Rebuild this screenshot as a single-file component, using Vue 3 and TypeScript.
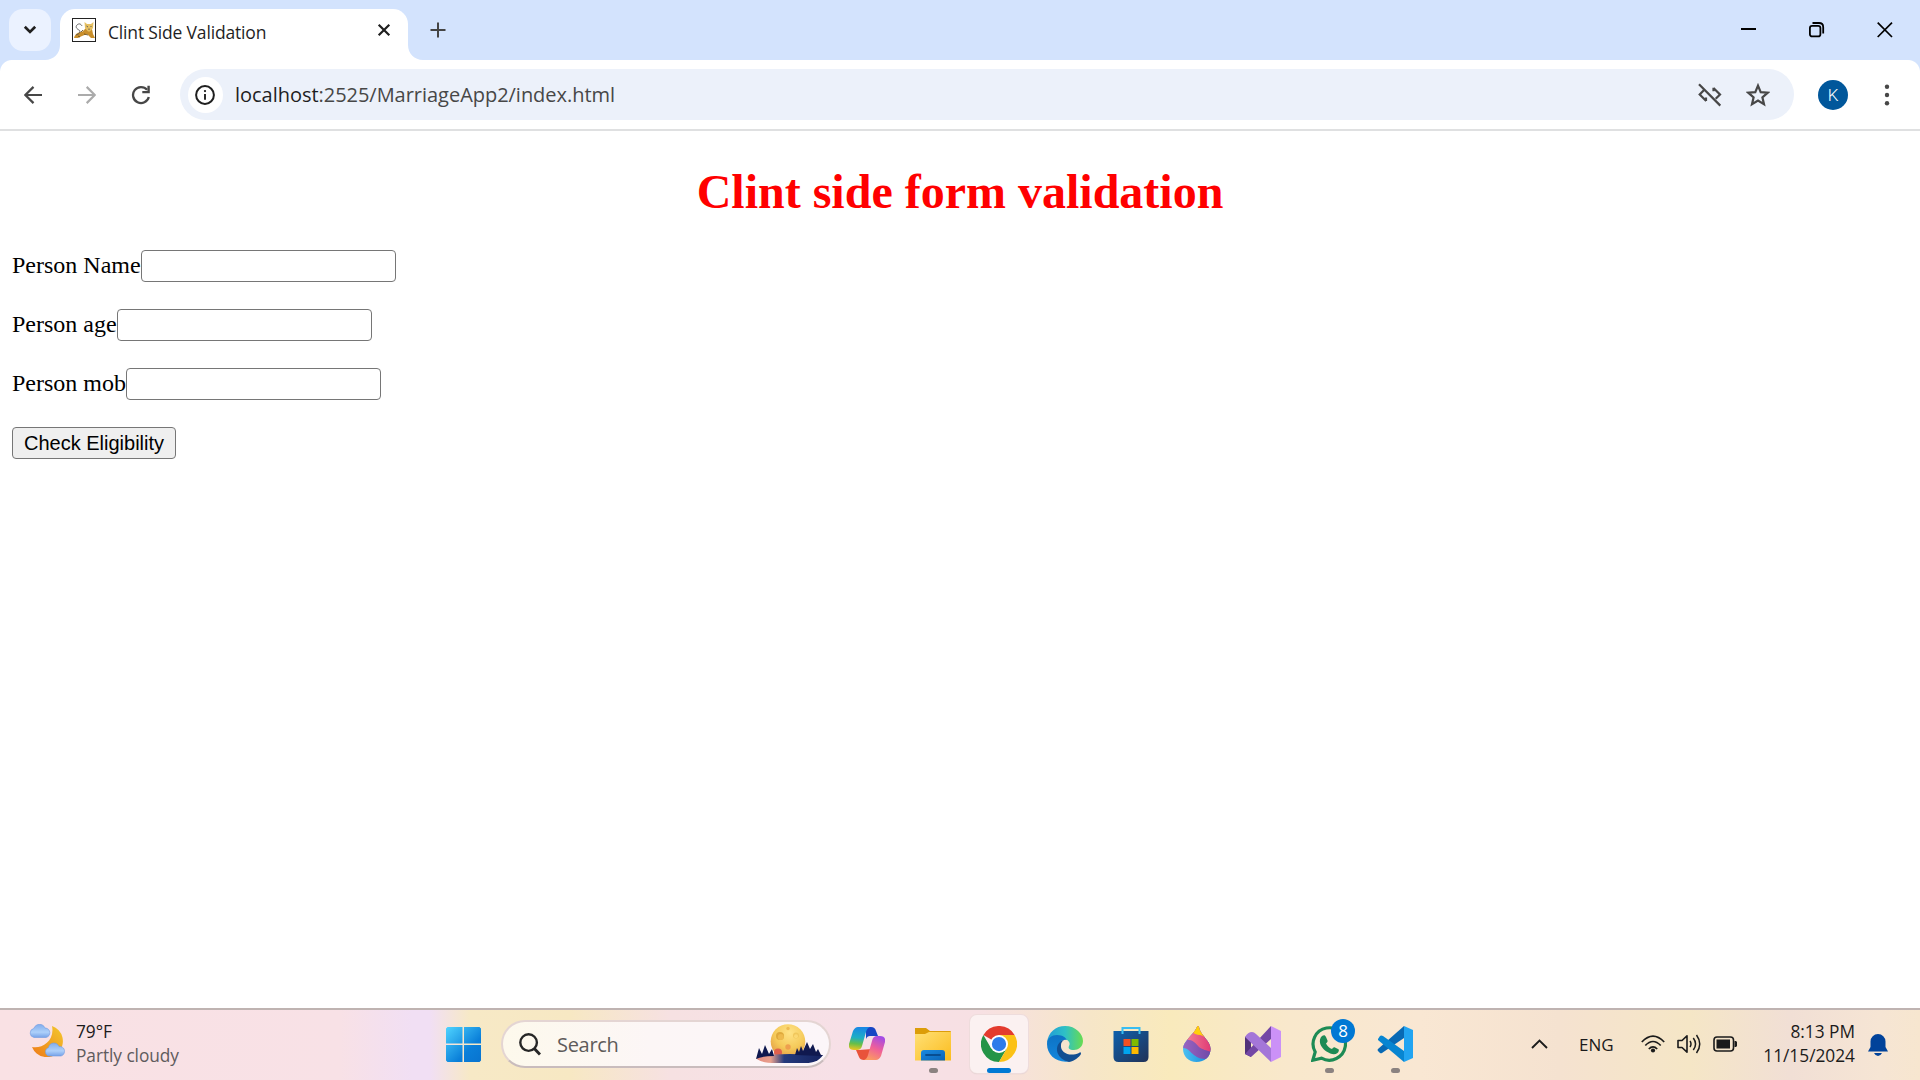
<script setup lang="ts">
import { ref } from 'vue'

interface Field {
  id: string
  label: string
}

const fields: Field[] = [
  { id: 'pname', label: 'Person Name' },
  { id: 'page', label: 'Person age' },
  { id: 'pmob', label: 'Person mob' },
]
const values = ref<Record<string, string>>({ pname: '', page: '', pmob: '' })
</script>

<template>
  <div class="screen">
    <header class="titlebar">
      <button class="tab-search" aria-label="Search tabs">
        <svg width="14" height="10" viewBox="0 0 14 10"><path d="M1.8 1.8 7 6.9l5.200-5.100" fill="none" stroke="#1f1f1f" stroke-width="2.700" /></svg>
      </button>
      <svg class="flare" width="15" height="51" viewBox="0 0 15 51"><path d="M15 36v15H0c8.500 0 15-6.500 15-15z" fill="#fff" /></svg>
      <div class="tab">
        <svg class="favicon" width="24" height="24" viewBox="0 0 24 24">
          <rect x=".5" y=".5" width="23" height="23" fill="#fff" stroke="#222" />
          <path d="M2 20c1-4 4-6 8-6l4-4 6 1 1 5 2 4h-4l-4-4-5 2-4 2H2z" fill="#c98f2c" />
          <path d="M12.500 4l2.500 2h4l2.500-2-.5 6-3 3.500h-2L13 10z" fill="#e6c062" />
          <path d="M4 17C8 16 9 13 7 12S3 9 5 7s4-1 5 1M14.500 8l1.500 1M19.500 8l-1 1M17 10.500v1.500" fill="none" stroke="#555" stroke-width=".9" />
          <path d="M9 14l2-2M12 16l4 1M6 18l2 1" stroke="#5b4113" stroke-width=".8" />
        </svg>
        <span class="tab-title">Clint Side Validation</span>
        <svg class="tab-close" width="14" height="14" viewBox="0 0 14 14"><path d="M1.700 1.700l10.600 10.600M12.300 1.700 1.700 12.300" stroke="#1f1f1f" stroke-width="2.200" /></svg>
      </div>
      <svg class="flare" width="15" height="51" viewBox="0 0 15 51"><path d="M0 36v15h15C6.500 51 0 44.500 0 36z" fill="#fff" /></svg>
      <svg class="new-tab" width="16" height="16" viewBox="0 0 16 16"><path d="M8 .5v15M.5 8h15" stroke="#444" stroke-width="2" /></svg>
      <div class="window-controls">
        <svg width="16" height="16" viewBox="0 0 16 16"><path d="M0 7h15" stroke="#000" stroke-width="2" /></svg>
        <svg width="16" height="16" viewBox="0 0 16 16"><rect x=".9" y="3.900" width="10.500" height="10.500" rx="2.200" fill="none" stroke="#000" stroke-width="1.800" /><path d="M3.500 1H10Q14.200 1 14.200 5.200V11.500" fill="none" stroke="#000" stroke-width="1.800" /></svg>
        <svg width="16" height="16" viewBox="0 0 16 16"><path d="M.7.700l14.300 14.300M15 .7.700 15" stroke="#000" stroke-width="1.700" /></svg>
      </div>
    </header>

    <nav class="toolbar">
      <svg class="nav-icon" width="18" height="18" viewBox="0 0 18 18"><path d="M17.600 9H1.600M9 .9.900 9l8.100 8.100" transform="translate(.5)" fill="none" stroke="#474747" stroke-width="2.200" /></svg>
      <svg class="nav-icon forward" width="18" height="18" viewBox="0 0 18 18"><path d="M0 9h16.400M9 .9 17.100 9 9 17.100" transform="translate(-.3)" fill="none" stroke="#ababab" stroke-width="2.200" /></svg>
      <svg class="nav-icon reload" width="20" height="20" viewBox="0 0 20 20"><path d="M16.100 4.800A8 8 0 1 0 17.800 12" fill="none" stroke="#474747" stroke-width="2.300" /><path d="M18.800.8v7.500h-7.500V6h5.100V.8z" fill="#474747" /></svg>
      <div class="omnibox">
        <span class="site-info">
          <svg width="20" height="20" viewBox="0 0 20 20"><circle cx="10" cy="10" r="8.900" fill="none" stroke="#1f1f1f" stroke-width="2" /><path d="M10 9v5.700" stroke="#1f1f1f" stroke-width="1.900" /><circle cx="10" cy="6.100" r="1.150" fill="#1f1f1f" /></svg>
        </span>
        <span class="url"><b>localhost</b>:2525/MarriageApp2/index.html</span>
        <svg class="link-off" width="24" height="24" viewBox="0 0 24 24"><path d="M1 1.300l21.300 21.300M5.800 7.200 1.700 11.500 8.200 18M8 18v-3.500M15.500 5l6.500 6.500-4.300 4.300M15.500 4.800v3.500" fill="none" stroke="#474747" stroke-width="2.200" /></svg>
        <svg class="star" width="24" height="24" viewBox="0 0 24 24"><path d="M12 2.600l2.700 6.500 7 .6-5.300 4.600 1.600 6.900-6-3.700-6 3.700 1.600-6.900L2.300 9.700l7-.6z" fill="none" stroke="#474747" stroke-width="2.200" /></svg>
      </div>
      <span class="avatar">K</span>
      <svg class="menu" width="6" height="22" viewBox="0 0 6 22"><circle cx="3" cy="2.700" r="2.200" /><circle cx="3" cy="11" r="2.200" /><circle cx="3" cy="19.300" r="2.200" /></svg>
    </nav>

    <main class="page">
      <h1>Clint side form validation</h1>
      <form @submit.prevent>
        <div v-for="f in fields" :key="f.id" class="row">
          <label :for="f.id">{{ f.label }}</label><input :id="f.id" v-model="values[f.id]" type="text" />
        </div>
        <button class="submit" type="submit">Check Eligibility</button>
      </form>
    </main>

    <footer class="taskbar">
      <div class="weather">
        <svg width="36" height="33" viewBox="0 0 36 33">
          <defs>
            <linearGradient id="moonG" x1="1" y1="0" x2="0" y2="1"><stop stop-color="#f3c92d" /><stop offset="1" stop-color="#ee7a18" /></linearGradient>
            <linearGradient id="cloudG" x1="0" y1="0" x2="0" y2="1"><stop stop-color="#82adec" /><stop offset=".6" stop-color="#add0fa" /><stop offset="1" stop-color="#76a2e8" /></linearGradient>
          </defs>
          <path d="M23 2a16 16 0 1 1-20 21C13 25 26 17 23 2z" fill="url(#moonG)" />
          <path d="M5 13.500a4.600 4.600 0 0 1-.3-9C7-1 14-1 16 4c6 0 6.500 8.500 1 9.500z" fill="url(#cloudG)" stroke="#719be0" stroke-width=".6" />
          <path d="M19 32a4.600 4.600 0 0 1 .5-8.500c1-5.500 8.500-6 10.500-1 7-.5 7 8.500 2 9.500z" fill="url(#cloudG)" stroke="#719be0" stroke-width=".6" />
        </svg>
        <div class="weather-text"><span>79°F</span><span class="dim">Partly cloudy</span></div>
      </div>

      <svg class="start" width="35" height="35" viewBox="0 0 35 35">
        <defs><linearGradient id="winG" gradientUnits="userSpaceOnUse" x1="0" y1="0" x2="35" y2="35"><stop stop-color="#4fd4ff" /><stop offset=".65" stop-color="#0a7fd9" /><stop offset="1" stop-color="#0873cf" /></linearGradient></defs>
        <path d="M1.500 0h15v16.500H0v-15zM18 0h15.500L35 1.500v15H18zM0 18h16.500v17h-15L0 33.500zM18 18h17v15.500L33.500 35H18z" fill="url(#winG)" />
      </svg>

      <div class="search">
        <svg class="glass" width="22" height="23" viewBox="0 0 22 23"><circle cx="9.600" cy="9.600" r="8.300" fill="none" stroke="#262626" stroke-width="2.400" /><path d="M15.500 15.800l5.500 5.700" stroke="#262626" stroke-width="3" /></svg>
        <span>Search</span>
        <svg class="moon" width="67" height="40" viewBox="0 0 67 40">
          <defs>
            <radialGradient id="moonR" cx=".55" cy=".25" r=".8"><stop stop-color="#ffe387" /><stop offset=".55" stop-color="#f5ca5a" /><stop offset="1" stop-color="#df9440" /></radialGradient>
            <linearGradient id="lakeG"><stop stop-color="#e58c80" /><stop offset=".22" stop-color="#e8a08e" /><stop offset=".42" stop-color="#243b7d" /><stop offset="1" stop-color="#15225f" /></linearGradient>
          </defs>
          <circle cx="32" cy="17.500" r="17.300" fill="url(#moonR)" />
          <circle cx="24" cy="12" r="4" fill="#dfa93c" /><circle cx="24.800" cy="13" r="3" fill="#eeba4d" />
          <circle cx="40" cy="11.500" r="3" fill="#f0c75c" /><circle cx="40" cy="12.200" r="2" fill="#fbd873" /><circle cx="32" cy="4.500" r="1.700" fill="#eebb52" />
          <circle cx="32" cy="23" r="2.700" fill="#ee9f4e" /><circle cx="22" cy="28.500" r="4" fill="#e1604c" />
          <path d="M0 34q12-4 34-4l33 1c-4 6-10 8-17 8H20Q4 39 0 34z" fill="url(#lakeG)" />
          <path d="M0 35l3-11 3 6 3-9 4 9 3-5 2 7q-12 0-18 3zM39 31l2-7 2 4 2-6 2 5 4-9 3 7 3-5 3 8 2-3 3 6 2 1z" fill="#10194f" />
        </svg>
      </div>

      <div class="apps">
        <div class="app">
          <svg width="36" height="36" viewBox="0 0 36 36">
            <defs>
              <linearGradient id="cpA" x1=".3" y1="0" x2=".2" y2="1"><stop stop-color="#1988e5" /><stop offset=".45" stop-color="#1eafc4" /><stop offset=".72" stop-color="#66bf48" /><stop offset="1" stop-color="#f3c420" /></linearGradient>
              <linearGradient id="cpB" x1=".7" y1="0" x2=".3" y2="1"><stop stop-color="#a34be6" /><stop offset=".5" stop-color="#ef6099" /><stop offset="1" stop-color="#fb9c60" /></linearGradient>
            </defs>
            <path d="M17 1h5q4 0 5 4l2 5h-8q-3 0-4 3z" fill="#1746c4" />
            <path d="M10 24H7l3 7q1 3 5 3h4l4-11z" fill="#e9533a" />
            <path d="M9 1h12q-3 1-4 5l-4 14q-1 4-5 4H5q-6 0-5-6L4 5q2-4 5-4z" fill="url(#cpA)" />
            <path d="M27 34H15q3-1 4-5l4-14q1-5 5-5h3q6 0 5 6l-4 14q-2 4-5 4z" fill="url(#cpB)" />
          </svg>
        </div>
        <div class="app running">
          <svg width="36" height="36" viewBox="0 0 36 36">
            <defs><linearGradient id="fdA" x1="0" y1="0" x2="1" y2="1"><stop stop-color="#ffe076" /><stop offset="1" stop-color="#fbbc1e" /></linearGradient><linearGradient id="fdB" x1="0" y1="0" x2="1" y2="1"><stop stop-color="#1a8ae0" /><stop offset="1" stop-color="#0b64b8" /></linearGradient></defs>
            <path d="M0 2h11l4 3h20q1 0 1 1v10H0z" fill="#dc9d09" />
            <path d="M0 8h10l4-2h22v28.500H0z" fill="url(#fdA)" />
            <path d="M6 34.500V27q0-3 3-3h18q3 0 3 3v7.500z" fill="url(#fdB)" /><path d="M11 29h14" stroke="#084d91" stroke-width="1.800" stroke-linecap="round" />
          </svg>
        </div>
        <div class="app active">
          <svg width="36" height="36" viewBox="0 0 48 48">
            <path d="M24 24 3.200 12A24 24 0 0 1 44.800 12z" fill="#e33b2e" />
            <path d="M13.600 30 3.200 12A24 24 0 0 0 24 48L34.400 30z" fill="#249447" />
            <path d="M24 12h20.800A24 24 0 0 1 24 48l10.400-18z" fill="#fbc116" />
            <circle cx="24" cy="24" r="12" fill="#fff" /><circle cx="24" cy="24" r="9.500" fill="#2d7bea" />
          </svg>
        </div>
        <div class="app">
          <svg width="36" height="36" viewBox="0 0 36 36">
            <defs><linearGradient id="edA"><stop stop-color="#209bd8" /><stop offset=".5" stop-color="#2ec0c6" /><stop offset="1" stop-color="#68dc50" /></linearGradient><linearGradient id="edB" x1="0" y1="0" x2="0" y2="1"><stop stop-color="#0d72c4" /><stop offset="1" stop-color="#1387dd" /></linearGradient></defs>
            <path d="M0 17C1 6 9 0 18 0c11 0 18 8 18 15 0 6-5 9-9 9-5 0-6-2-5-4 2-3-1-7-5-7C9 13 5 11 0 17z" fill="url(#edA)" />
            <path d="M0 18c0-6 5-9 10-9 6 0 9 3 10 5-6-1-9 4-8 9 1 6 6 11 12 12C11 38 0 30 0 18z" fill="url(#edB)" />
            <path d="M13 16c-6 6-3 17 9 20 6-1 10-5 12-8 0-2-1-2-2-1-9 4-19 0-18-8 0-2 1-4 3-5-2 0-3 1-4 2z" fill="#114e91" />
          </svg>
        </div>
        <div class="app">
          <svg width="36" height="36" viewBox="0 0 36 36">
            <defs><linearGradient id="stA" x1="0" y1="0" x2="1" y2="1"><stop stop-color="#0d60ac" /><stop offset="1" stop-color="#223257" /></linearGradient></defs>
            <path d="M.5 5h35v26q0 5-5 5h-25q-5 0-5-5z" fill="url(#stA)" /><path d="M9.500 8V2h17v6" fill="none" stroke="#38bdf2" stroke-width="2" />
            <path d="M10.500 13h7v7h-7z" fill="#f25022" /><path d="M18.500 13h7v7h-7z" fill="#7fba00" /><path d="M10.500 21h7v7h-7z" fill="#00a4ef" /><path d="M18.500 21h7v7h-7z" fill="#ffb900" />
          </svg>
        </div>
        <div class="app">
          <svg width="36" height="36" viewBox="0 0 36 36">
            <defs>
              <clipPath id="drop"><path d="M19 0c1 0 1 1 1.500 3 2 7 11 12 11 20 0 8-6 13-14 13S4 30 4 23C4 15 14.500 9 18 1q0-1 1-1z" /></clipPath>
              <linearGradient id="drB"><stop stop-color="#54c9f5" /><stop offset="1" stop-color="#087fd6" /></linearGradient>
              <linearGradient id="drP"><stop stop-color="#a068c4" /><stop offset="1" stop-color="#6845a4" /></linearGradient>
              <linearGradient id="drR"><stop offset=".2" stop-color="#f0758f" /><stop offset="1" stop-color="#e03a75" /></linearGradient>
            </defs>
            <g clip-path="url(#drop)"><path d="M0 0h36v36H0z" fill="url(#drB)" /><path d="M0 22c9-1 10 3 15 7 4 3 7 4 12 4l9-3V0H0z" fill="url(#drP)" /><path d="M5 14c9-1 11 3 15 7 4 3 7 3 12 5V0H5z" fill="url(#drR)" /><path d="M12 5q4 4 9 4 5 1 9 6V0H12z" fill="#ffd00b" /></g>
          </svg>
        </div>
        <div class="app">
          <svg width="36" height="36" viewBox="0 0 36 36">
            <path d="M0 11 6 8v23l-6-3z" fill="#52327a" /><path d="M6 31 0 28 26 0v13z" fill="#7447a5" />
            <path d="M0 11q3-5 7-5 2 0 4 2l15 14v14z" fill="#a476d8" /><path d="M26 0l10 5v26l-10 5z" fill="#cb91f7" />
          </svg>
        </div>
        <div class="app running">
          <svg width="36" height="36" viewBox="0 0 36 36">
            <path d="M1.800 34.200 4.200 26A16.200 16.200 0 1 1 10.500 32.200z" fill="none" stroke="#1d8b55" stroke-width="3.200" />
            <path d="M11 10c2-1 3-1 4 1l1.500 3.500c.5 1-.5 2-1.500 3 1.500 3 3.500 4.500 6 5.500 1-1 1.500-2 2.500-1.700l4 2c1 .7 0 3-1 3.800-3 2.400-7 1-11-1.500S8 18 9 13.500q.5-2.300 2-3.500z" fill="#1d8b55" />
          </svg>
          <span class="badge">8</span>
        </div>
        <div class="app running">
          <svg width="36" height="36" viewBox="0 0 36 36">
            <path d="M1 23 27 0v12L5 27q-1 .5-2 0l-2-2q-1-1 0-2z" fill="#0869b4" />
            <path d="M1 13 3 10q1-1 3 0l21 15v11L1 14z" fill="#0785d1" /><path d="M27 0l9 4v28l-9 4z" fill="#22a4f1" />
          </svg>
        </div>
      </div>

      <div class="tray">
        <svg width="17" height="10" viewBox="0 0 17 10"><path d="M1 9l7.500-7.500L16 9" fill="none" stroke="#1b1b1b" stroke-width="1.900" /></svg>
        <span class="lang">ENG</span>
        <svg class="wifi" width="24" height="18" viewBox="0 0 24 18"><path d="M.8 7q11.200-11.600 22.400 0M4.300 10.500q7.700-8 15.400 0M7.800 14q4.200-4.400 8.400 0" fill="none" stroke="#1b1b1b" stroke-width="1.700" /><circle cx="12" cy="15.500" r="2.100" fill="#1b1b1b" /></svg>
        <svg class="volume" width="25" height="20" viewBox="0 0 25 20"><path d="M1 6.500h4l5-4.700v16.400l-5-4.700H1z" fill="none" stroke="#1b1b1b" stroke-width="1.600" stroke-linejoin="round" /><path d="M13 7q2 3 0 6M16.300 4q4.500 6 0 12M19.500 1q6.500 9 0 18" fill="none" stroke="#1b1b1b" stroke-width="1.500" /></svg>
        <svg class="battery" width="25" height="16" viewBox="0 0 25 16"><rect x="1" y="1" width="19.500" height="14" rx="3" fill="none" stroke="#1b1b1b" stroke-width="1.600" /><path d="M3.500 3.500H17v9H3.500zM21.500 5H23l1 1v4l-1 1h-1.500z" fill="#1b1b1b" /></svg>
        <div class="clock"><span>8:13 PM</span><span>11/15/2024</span></div>
        <svg class="bell" width="20" height="23" viewBox="0 0 20 23"><path d="M2.500 8.500a7.500 7.500 0 0 1 15 0V14l2.500 4.500H0L2.500 14zM6 20h8q-1.500 3-4 3t-4-3z" fill="#00429a" /></svg>
      </div>
    </footer>
  </div>
</template>

<style>
html,
body {
  margin: 0;
  background: #fff;
}
</style>

<style scoped>
.screen {
  width: 1920px;
  height: 1080px;
  overflow: hidden;
  display: flex;
  flex-direction: column;
  background: #fff;
  font-family: 'Open Sans', 'Noto Sans', sans-serif;
  color: #1b1b1b;
}
svg {
  display: block;
  flex: none;
}
.titlebar {
  height: 60px;
  flex: none;
  display: flex;
  align-items: flex-start;
  padding: 9px 0 0 9px;
  box-sizing: border-box;
  background: #d3e3fd;
}
.tab-search {
  width: 42px;
  height: 42px;
  padding: 0;
  border: 0;
  border-radius: 14px;
  background: #ebf2ff;
  display: flex;
  align-items: center;
  justify-content: center;
}
.flare:first-of-type {
  margin-left: -6px;
}
.tab {
  width: 348px;
  height: 51px;
  box-sizing: border-box;
  padding: 0 17px 0 12px;
  border-radius: 15px 15px 0 0;
  background: #fff;
  display: flex;
  align-items: flex-start;
}
.favicon {
  margin-top: 9px;
}
.tab-title {
  margin: 10px 0 0 12px;
  font-size: 17.5px;
  line-height: 26px;
  letter-spacing: -0.17px;
  color: #1f1f1f;
  white-space: nowrap;
}
.tab-close {
  margin: 14px 0 0 auto;
}
.new-tab {
  margin: 13px 0 0 7px;
}
.window-controls {
  display: flex;
  gap: 52px;
  margin: 13px 27px 0 auto;
}
.toolbar {
  height: 71px;
  flex: none;
  box-sizing: border-box;
  border-bottom: 2px solid #dfe0e1;
  display: flex;
  align-items: center;
  padding-left: 24px;
  background:
    radial-gradient(circle at 12px 12px, #fff 11.500px, #d3e3fd 12.500px) 0 0 / 12px 12px no-repeat,
    radial-gradient(circle at 0 12px, #fff 11.500px, #d3e3fd 12.500px) 100% 0 / 12px 12px no-repeat,
    #fff;
}
.forward {
  margin-left: 36px;
}
.reload {
  margin-left: 35px;
}
.omnibox {
  margin-left: 29px;
  width: 1614px;
  height: 51px;
  border-radius: 26px;
  box-sizing: border-box;
  padding: 0 24px 0 8px;
  background: #ecf1fa;
  display: flex;
  align-items: center;
}
.site-info {
  width: 35px;
  height: 36px;
  border-radius: 50%;
  background: #fff;
  display: flex;
  align-items: center;
  justify-content: center;
}
.site-info svg {
  margin-right: 1px;
}
.url {
  margin-left: 12px;
  font-size: 20px;
  line-height: 30px;
  letter-spacing: -0.03px;
  color: #474747;
  white-space: nowrap;
}
.url b {
  font-weight: 400;
  color: #1f1f1f;
}
.link-off {
  margin-left: auto;
}
.star {
  margin-left: 24px;
}
.avatar {
  margin-left: 24px;
  width: 30px;
  height: 30px;
  border-radius: 50%;
  background: #01579b;
  color: #fff;
  font: 300 17px/31px Roboto, sans-serif;
  text-align: center;
}
.menu {
  margin-left: 36px;
  fill: #474747;
}
.page {
  flex: 1;
  padding: 33px 12px 0;
  font: 24px/32px 'Liberation Serif', serif;
  color: #000;
}
.page h1 {
  margin: 0 0 31px;
  height: 55px;
  font-size: 48px;
  line-height: 55px;
  text-align: center;
  color: #f00;
}
.row {
  display: flex;
  height: 32px;
  margin-bottom: 27px;
}
.row label {
  line-height: 31px;
}
.row input {
  width: 255px;
  height: 32px;
  box-sizing: border-box;
  border: 1px solid #767676;
  border-radius: 4px;
  padding: 2px 3px;
  font: 20px 'Liberation Sans', sans-serif;
}
.submit {
  display: block;
  width: 164px;
  height: 32px;
  padding: 0;
  border: 1px solid #767676;
  border-radius: 4px;
  background: #efefef;
  color: #000;
  font: 20px/30px 'Liberation Sans', sans-serif;
  white-space: nowrap;
}
.taskbar {
  height: 72px;
  flex: none;
  box-sizing: border-box;
  border-top: 2px solid #bfb3b1;
  display: flex;
  align-items: center;
  background: linear-gradient(90deg, #f9e1e4 0, #f8e1e6 340px, #f1dff4 412px, #f1dff4 430px, #f7e9c6 470px, #f7e8c3 570px, #f6e1e2 670px, #f7e0e7 850px, #f7e0e3 980px, #f6e6c8 1090px, #f9eabc 1170px, #f9e8cc 1290px, #f9e7d3 1420px, #f5e2d0 1560px, #f5e6c6 1690px, #f1dfd5 1790px, #f6e5d4 1880px, #f7e6cf 1920px);
}
.weather {
  display: flex;
  width: 417px;
  padding-left: 29px;
  margin-top: -3px;
}
.weather svg {
  margin-top: 4px;
}
.weather-text {
  margin-left: 11px;
  display: flex;
  flex-direction: column;
  font-size: 17.3px;
  line-height: 24px;
  letter-spacing: -0.05px;
}
.dim {
  color: #605b5d;
}
.start {
  margin-top: -1px;
}
.search {
  margin: -2px 0 0 20px;
  width: 330px;
  height: 48px;
  box-sizing: border-box;
  border: 2px solid #e4d5d3;
  border-bottom-color: #c9bcbd;
  border-radius: 24px;
  background: linear-gradient(90deg, #fdf9ec, #fcf6f6 45%, #fcf6f9);
  display: flex;
  align-items: center;
  padding: 0 6px 0 16px;
  font-size: 20px;
  letter-spacing: -0.3px;
  color: #5e5b5a;
}
.search span {
  margin-left: 16px;
}
.moon {
  margin-left: auto;
}
.apps {
  display: flex;
  margin-left: 3px;
}
.app {
  position: relative;
  width: 58px;
  height: 58px;
  margin: -2px 4px 0;
  display: flex;
  align-items: center;
  justify-content: center;
  box-sizing: border-box;
}
.app.active {
  border-radius: 7px;
  background: #fbf1f1;
  box-shadow: 0 0 0 1px #eedcdc, 0 1px 1px #cfbfc0;
}
.app.running::after,
.app.active::after {
  content: '';
  position: absolute;
  left: 50%;
  bottom: 0;
  width: 9px;
  height: 5px;
  margin-left: -4.5px;
  border-radius: 3px;
  background: #8b8280;
}
.app.active::after {
  width: 24px;
  margin-left: -12px;
  background: #0078d4;
}
.badge {
  position: absolute;
  left: 31px;
  top: 4px;
  width: 24px;
  height: 24px;
  border-radius: 50%;
  background: #0078d4;
  color: #fff;
  font-size: 17px;
  line-height: 24px;
  text-align: center;
}
.tray {
  display: flex;
  align-items: center;
  margin: -2px 0 0 auto;
  padding-right: 32px;
}
.lang {
  margin-left: 31px;
  width: 35px;
  font-size: 17px;
}
.wifi {
  margin-left: 27px;
}
.volume {
  margin-left: 12px;
}
.battery {
  margin-left: 11px;
}
.clock {
  width: 100px;
  margin: -1px 0 0 17px;
  display: flex;
  flex-direction: column;
  align-items: flex-end;
  font-size: 17.3px;
  line-height: 24px;
}
.bell {
  margin-left: 13px;
}
</style>
